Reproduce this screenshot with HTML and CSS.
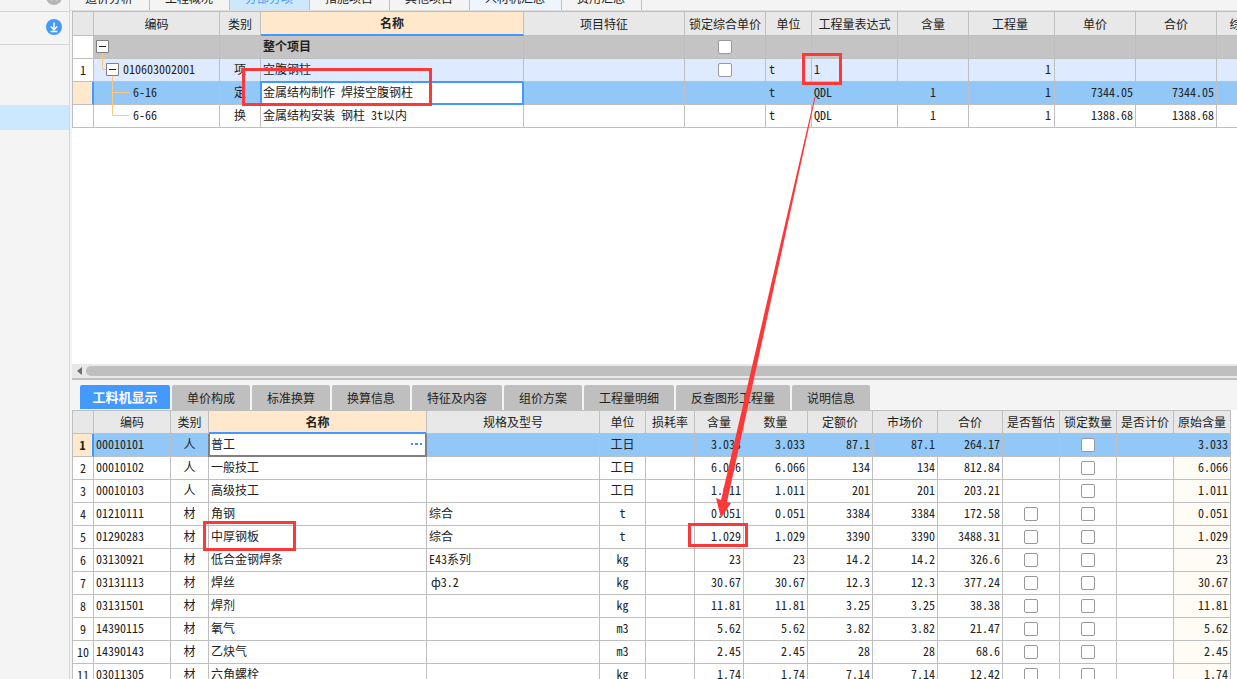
FILE: index.html
```html
<!DOCTYPE html>
<html lang="zh-CN">
<head>
<meta charset="utf-8">
<title>分部分项</title>
<link rel="stylesheet" href="styles.css">
</head>
<body>
<div class="app">
  <aside class="side">
    <div class="side-top"><svg width="16" height="16" viewBox="0 0 16 16"><circle cx="8" cy="8" r="8" fill="#b5b5b5"/><path d="M5 5l6 6M11 5l-6 6" stroke="#fff" stroke-width="2"/></svg></div>
    <div class="side-head">
      <button class="round" aria-label="下载"><svg width="16" height="16" viewBox="0 0 16 16"><circle cx="8" cy="8" r="8" fill="#4499ff"/><path d="M8 3.500v7M4.800 7.500L8 10.700l3.200-3.200M4.500 12.500h7" stroke="#fff" stroke-width="1.500" fill="none"/></svg></button>
    </div>
    <div class="side-gap"></div>
    <div class="side-selected"></div>
  </aside>

  <main class="main">
    <nav class="top-tabs">
      <button>造价分析</button><button>工程概况</button><button class="on">分部分项</button><button>措施项目</button><button>其他项目</button><button class="tint">人材机汇总</button><button>费用汇总</button>
    </nav>

    <section class="pane upper">
      <table class="grid items">
        <colgroup><col class="w21"><col class="w126"><col class="w41"><col class="w263"><col class="w161"><col class="w81"><col class="w46"><col class="w86"><col class="w71"><col class="w86"><col class="w81"><col class="w81"><col class="w74"></colgroup>
        <thead>
          <tr><th></th><th>编码</th><th>类别</th><th class="hot">名称</th><th>项目特征</th><th>锁定综合单价</th><th>单位</th><th>工程量表达式</th><th>含量</th><th>工程量</th><th>单价</th><th>合价</th><th>综合单价</th></tr>
        </thead>
        <tbody>
          <tr class="total"><td class="no"></td>
            <td class="node"><div class="tree"><svg width="29" height="22"><path class="branch" d="M8.500 17v6"/><path class="box" d="M2.500 4.500h12v12h-12z"/><path class="minus" d="M5 10.500h7"/></svg></div></td>
            <td></td><td class="l b">整个项目</td><td></td><td class="c"><input type="checkbox" aria-label="锁定综合单价 整个项目"></td><td></td><td></td><td></td><td></td><td></td><td></td><td></td></tr>
          <tr class="group"><td class="no">1</td>
            <td class="node"><div class="tree"><svg width="29" height="22"><path class="branch" d="M8.500 0v10.500h4M18.500 17v6"/><path class="box" d="M12.500 4.500h12v12h-12z"/><path class="minus" d="M15 10.500h7"/></svg><span>010603002001</span></div></td>
            <td>项</td><td class="l">空腹钢柱</td><td></td><td class="c"><input type="checkbox" aria-label="锁定综合单价 空腹钢柱"></td><td class="l u">t</td><td class="l">1</td><td></td><td class="r">1</td><td></td><td></td><td></td></tr>
          <tr class="sel"><td class="no cur"></td>
            <td class="node"><div class="tree"><svg width="39" height="22"><path class="branch" d="M18.500 0v23M18.500 10.500h17"/></svg><span>6-16</span></div></td>
            <td>定</td><td class="l focus">金属结构制作 焊接空腹钢柱</td><td></td><td></td><td class="l u">t</td><td class="l">QDL</td><td>1</td><td class="r">1</td><td class="r">7344.05</td><td class="r">7344.05</td><td></td></tr>
          <tr><td class="no"></td>
            <td class="node"><div class="tree"><svg width="39" height="22"><path class="branch" d="M18.500 0v10.500h17"/></svg><span>6-66</span></div></td>
            <td>换</td><td class="l">金属结构安装 钢柱 3t以内</td><td></td><td></td><td class="l u">t</td><td class="l">QDL</td><td>1</td><td class="r">1</td><td class="r">1388.68</td><td class="r">1388.68</td><td></td></tr>
        </tbody>
      </table>
    </section>

    <div class="hscroll"><button class="arrow" aria-label="向左滚动"><svg width="5" height="8"><path d="M5 0v8L0 4z" fill="#6b6b75"/></svg></button><div class="thumb"></div></div>

    <nav class="detail-tabs">
      <button class="on">工料机显示</button><button>单价构成</button><button>标准换算</button><button>换算信息</button><button>特征及内容</button><button>组价方案</button><button>工程量明细</button><button>反查图形工程量</button><button>说明信息</button>
    </nav>

    <section class="pane lower">
      <table class="grid detail">
        <colgroup><col class="w21"><col class="w77"><col class="w38"><col class="w218"><col class="w173"><col class="w46"><col class="w49"><col class="w49"><col class="w64"><col class="w65"><col class="w65"><col class="w65"><col class="w57"><col class="w57"><col class="w57"><col class="w57"></colgroup>
        <thead>
          <tr><th></th><th>编码</th><th>类别</th><th class="hot">名称</th><th>规格及型号</th><th>单位</th><th>损耗率</th><th>含量</th><th>数量</th><th>定额价</th><th>市场价</th><th>合价</th><th>是否暂估</th><th>锁定数量</th><th>是否计价</th><th>原始含量</th></tr>
        </thead>
        <tbody>
          <tr class="sel"><td class="no cur">1</td><td class="l">00010101</td><td>人</td><td class="l edit"><div class="editor"><span>普工</span><button aria-label="更多"><svg width="11" height="2"><path d="M0 0h2v2H0zM4 0h3v2H4zM9 0h2v2H9z" fill="#4a90c8"/></svg></button></div></td><td></td><td>工日</td><td></td><td class="r">3.033</td><td class="r">3.033</td><td class="r">87.1</td><td class="r">87.1</td><td class="r">264.17</td><td></td><td class="c"><input type="checkbox" aria-label="锁定数量 1"></td><td></td><td class="r orig">3.033</td></tr>
          <tr><td class="no">2</td><td class="l">00010102</td><td>人</td><td class="l">一般技工</td><td></td><td>工日</td><td></td><td class="r">6.066</td><td class="r">6.066</td><td class="r">134</td><td class="r">134</td><td class="r">812.84</td><td></td><td class="c"><input type="checkbox" aria-label="锁定数量 2"></td><td></td><td class="r orig">6.066</td></tr>
          <tr><td class="no">3</td><td class="l">00010103</td><td>人</td><td class="l">高级技工</td><td></td><td>工日</td><td></td><td class="r">1.011</td><td class="r">1.011</td><td class="r">201</td><td class="r">201</td><td class="r">203.21</td><td></td><td class="c"><input type="checkbox" aria-label="锁定数量 3"></td><td></td><td class="r orig">1.011</td></tr>
          <tr><td class="no">4</td><td class="l">01210111</td><td>材</td><td class="l">角钢</td><td class="l">综合</td><td>t</td><td></td><td class="r">0.051</td><td class="r">0.051</td><td class="r">3384</td><td class="r">3384</td><td class="r">172.58</td><td class="c"><input type="checkbox" aria-label="是否暂估 4"></td><td class="c"><input type="checkbox" aria-label="锁定数量 4"></td><td></td><td class="r orig">0.051</td></tr>
          <tr><td class="no">5</td><td class="l">01290283</td><td>材</td><td class="l">中厚钢板</td><td class="l">综合</td><td>t</td><td></td><td class="r">1.029</td><td class="r">1.029</td><td class="r">3390</td><td class="r">3390</td><td class="r">3488.31</td><td class="c"><input type="checkbox" aria-label="是否暂估 5"></td><td class="c"><input type="checkbox" aria-label="锁定数量 5"></td><td></td><td class="r orig">1.029</td></tr>
          <tr><td class="no">6</td><td class="l">03130921</td><td>材</td><td class="l">低合金钢焊条</td><td class="l">E43系列</td><td>kg</td><td></td><td class="r">23</td><td class="r">23</td><td class="r">14.2</td><td class="r">14.2</td><td class="r">326.6</td><td class="c"><input type="checkbox" aria-label="是否暂估 6"></td><td class="c"><input type="checkbox" aria-label="锁定数量 6"></td><td></td><td class="r orig">23</td></tr>
          <tr><td class="no">7</td><td class="l">03131113</td><td>材</td><td class="l">焊丝</td><td class="l dia">ф3.2</td><td>kg</td><td></td><td class="r">30.67</td><td class="r">30.67</td><td class="r">12.3</td><td class="r">12.3</td><td class="r">377.24</td><td class="c"><input type="checkbox" aria-label="是否暂估 7"></td><td class="c"><input type="checkbox" aria-label="锁定数量 7"></td><td></td><td class="r orig">30.67</td></tr>
          <tr><td class="no">8</td><td class="l">03131501</td><td>材</td><td class="l">焊剂</td><td></td><td>kg</td><td></td><td class="r">11.81</td><td class="r">11.81</td><td class="r">3.25</td><td class="r">3.25</td><td class="r">38.38</td><td class="c"><input type="checkbox" aria-label="是否暂估 8"></td><td class="c"><input type="checkbox" aria-label="锁定数量 8"></td><td></td><td class="r orig">11.81</td></tr>
          <tr><td class="no">9</td><td class="l">14390115</td><td>材</td><td class="l">氧气</td><td></td><td>m3</td><td></td><td class="r">5.62</td><td class="r">5.62</td><td class="r">3.82</td><td class="r">3.82</td><td class="r">21.47</td><td class="c"><input type="checkbox" aria-label="是否暂估 9"></td><td class="c"><input type="checkbox" aria-label="锁定数量 9"></td><td></td><td class="r orig">5.62</td></tr>
          <tr><td class="no">10</td><td class="l">14390143</td><td>材</td><td class="l">乙炔气</td><td></td><td>m3</td><td></td><td class="r">2.45</td><td class="r">2.45</td><td class="r">28</td><td class="r">28</td><td class="r">68.6</td><td class="c"><input type="checkbox" aria-label="是否暂估 10"></td><td class="c"><input type="checkbox" aria-label="锁定数量 10"></td><td></td><td class="r orig">2.45</td></tr>
          <tr><td class="no">11</td><td class="l">03011305</td><td>材</td><td class="l">六角螺栓</td><td></td><td>kg</td><td></td><td class="r">1.74</td><td class="r">1.74</td><td class="r">7.14</td><td class="r">7.14</td><td class="r">12.42</td><td class="c"><input type="checkbox" aria-label="是否暂估 11"></td><td class="c"><input type="checkbox" aria-label="锁定数量 11"></td><td></td><td class="r orig">1.74</td></tr>
        </tbody>
      </table>
    </section>
  </main>

  <svg class="marks" width="1237" height="679" viewBox="0 0 1237 679" aria-hidden="true">
    <g fill="none" stroke="#fc3838" stroke-width="3">
      <rect x="243.500" y="69.500" width="187" height="35"/>
      <rect x="803.500" y="54.500" width="37" height="29"/>
      <rect x="204.500" y="522.500" width="90" height="27"/>
      <rect x="689.500" y="524.500" width="57" height="21"/>
    </g>
    <path d="M814.500 97L721 500l-5-2 5 20 10-15-4-1L815.500 97z" fill="#fc3838"/>
  </svg>
</div>
</body>
</html>
```

FILE: styles.css
```css
* { box-sizing: border-box; }
body { margin: 0; background: #f4f4f4; color: #222; font: 12px/22px "Noto Sans Mono CJK SC", "Noto Sans CJK SC", sans-serif; }
button { border: 0; padding: 0; margin: 0; background: none; font: inherit; color: inherit; white-space: nowrap; }
svg { display: block; flex: none; overflow: visible; }

.app { position: relative; display: flex; height: 100vh; overflow: hidden; }
.marks { position: absolute; left: 0; top: 0; pointer-events: none; }

.side { flex: none; width: 70px; border-right: 1px solid #d6d6d6; }
.side-top { height: 12px; border-bottom: 1px solid #d6d6d6; display: flex; align-items: flex-end; justify-content: flex-end; padding: 0 7px 6px 0; }
.side-head { height: 33px; border-bottom: 1px solid #d6d6d6; display: flex; align-items: center; justify-content: flex-end; padding: 0 7px 2px 0; }
.side-gap { height: 60px; }
.side-selected { height: 25px; background: #cce8ff; }

.main { flex: 1; min-width: 0; display: flex; flex-direction: column; }
.top-tabs { flex: none; height: 11px; display: flex; align-items: flex-end; overflow: hidden; border-bottom: 1px solid #dcdcdc; }
.top-tabs button { padding: 0 16px 1px 15px; border-right: 1px solid #c0c0c0; }
.top-tabs .on { background: #cce8ff; color: #4499ff; }
.top-tabs .tint { background: #edf5ff; }

.pane { overflow: hidden; background: #fff; margin-left: 2px; min-height: 0; }
.upper { flex: 353 1 0; }
.lower { flex: 269 1 0; }

.grid { table-layout: fixed; border-collapse: separate; border-spacing: 0; border: 0 solid #bfbfbf; border-width: 1px 0 0 1px; }
.items { width: 1219px; }
.detail { width: 1159px; }
.w21 { width: 21px; }
.w38 { width: 38px; }
.w41 { width: 41px; }
.w46 { width: 46px; }
.w49 { width: 49px; }
.w57 { width: 57px; }
.w64 { width: 64px; }
.w65 { width: 65px; }
.w71 { width: 71px; }
.w74 { width: 74px; }
.w77 { width: 77px; }
.w81 { width: 81px; }
.w86 { width: 86px; }
.w126 { width: 126px; }
.w161 { width: 161px; }
.w173 { width: 173px; }
.w218 { width: 218px; }
.w263 { width: 263px; }

.grid th, .grid td { height: 23px; padding: 0; border: 0 solid #bfbfbf; border-width: 0 1px 1px 0; text-align: center; white-space: nowrap; overflow: hidden; line-height: 20px; vertical-align: middle; }
.grid th { background: #e8e8e8; font-weight: normal; }
.grid.items th { height: 24px; }
.grid td { padding-bottom: 2px; }
.grid td.c, .grid td.no, .grid td.node { padding-bottom: 0; }
.grid th.hot { background: #ffe8cc; font-weight: bold; border-bottom: 2px solid #4499ff; }
.grid td.l { text-align: left; padding-left: 2px; }
.grid td.r { text-align: right; padding-right: 2px; }
.grid td.u { padding-left: 3px; }
.grid td.dia { padding-left: 4px; }
.grid .b { font-weight: bold; }
.grid.items tr > :nth-child(10) { padding-right: 3px; }
.total td { background: #c4c4c4; }
.group td { background: #deeaff; }
.orig { background: #fffbf5; }
.sel td { background: #92c8f8; }
.grid td.no { background: #fff; }
.grid td.cur { background: #ffe8cc; border-right: 2px solid #4499ff; font-weight: bold; }
.grid td.focus { background: #fff; border-color: #4499ff; box-shadow: -1px -1px 0 #4499ff, inset 0 0 0 1px #4499ff; }
.grid td.edit { background: #fff; border-color: #808080; box-shadow: -1px 0 0 #808080, inset -1px -1px 0 #808080, inset 1px 0 0 #808080; }
.editor { display: flex; align-items: center; justify-content: space-between; padding-right: 4px; }

.tree { display: flex; align-items: center; height: 22px; }
.tree span { padding-bottom: 2px; }
.grid td.node { overflow: visible; }
.branch { fill: none; stroke: #ffc880; }
.box { fill: #fff; stroke: #808080; }
.minus { stroke: #222; }

input[type="checkbox"] { appearance: none; display: block; width: 14px; height: 14px; margin: 0 auto; border: 1px solid #999; border-radius: 2px; background: #fff; }

.hscroll { flex: none; display: flex; align-items: center; height: 16px; margin-left: 2px; padding-left: 5px; gap: 4px; background: #e8e8e8; border-bottom: 2px solid #bfbfbf; }
.thumb { flex: 1; height: 10px; border-radius: 5px 0 0 5px; background: #bfbfbf; }

.detail-tabs { flex: none; display: flex; gap: 2px; height: 30px; padding: 5px 0 0 10px; }
.detail-tabs button { padding: 0 15px; height: 25px; background: #bfbfbf; border-radius: 2px 2px 0 0; }
.detail-tabs .on { height: 24px; padding: 0 12px; min-width: 90px; background: #4499ff; color: #fff; font-weight: bold; font-size: 13px; }
```
